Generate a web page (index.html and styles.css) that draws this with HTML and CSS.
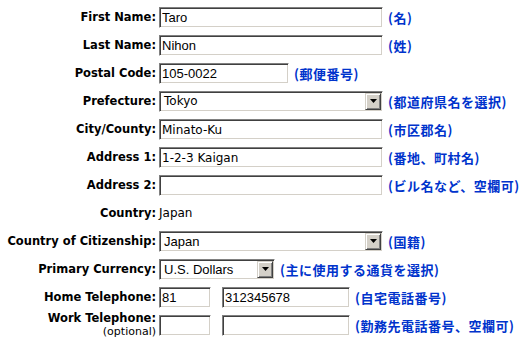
FILE: index.html
```html
<!DOCTYPE html>
<html lang="ja">
<head>
<meta charset="utf-8">
<title>Address Form</title>
<link rel="stylesheet" href="styles.css">
</head>
<body>
<form class="form">
  <label class="label">First Name:</label>
  <div class="field"><input class="text w-long f-arial" value="Taro"><span class="hint">(名)</span></div>

  <label class="label">Last Name:</label>
  <div class="field"><input class="text w-long f-arial" value="Nihon"><span class="hint">(姓)</span></div>

  <label class="label">Postal Code:</label>
  <div class="field"><input class="text w-postal f-arial" value="105-0022"><span class="hint">(郵便番号)</span></div>

  <label class="label">Prefecture:</label>
  <div class="field"><div class="select w-long"><span class="select-value f-verdana">Tokyo</span><span class="select-btn"><svg width="7" height="4" viewBox="0 0 7 4"><path d="M0 0h7L3.5 4z" fill="#000"/></svg></span></div><span class="hint">(都道府県名を選択)</span></div>

  <label class="label">City/County:</label>
  <div class="field"><input class="text w-long f-verdana" value="Minato-Ku"><span class="hint">(市区郡名)</span></div>

  <label class="label">Address 1:</label>
  <div class="field"><input class="text w-long f-verdana" value="1-2-3 Kaigan"><span class="hint">(番地、町村名)</span></div>

  <label class="label">Address 2:</label>
  <div class="field"><input class="text w-long f-verdana" value=""><span class="hint">(ビル名など、空欄可)</span></div>

  <label class="label">Country:</label>
  <div class="field"><span class="plain">Japan</span></div>

  <label class="label">Country of Citizenship:</label>
  <div class="field"><div class="select w-long"><span class="select-value f-arial">Japan</span><span class="select-btn"><svg width="7" height="4" viewBox="0 0 7 4"><path d="M0 0h7L3.5 4z" fill="#000"/></svg></span></div><span class="hint">(国籍)</span></div>

  <label class="label">Primary Currency:</label>
  <div class="field"><div class="select w-currency"><span class="select-value f-arial">U.S. Dollars</span><span class="select-btn"><svg width="7" height="4" viewBox="0 0 7 4"><path d="M0 0h7L3.5 4z" fill="#000"/></svg></span></div><span class="hint">(主に使用する通貨を選択)</span></div>

  <label class="label">Home Telephone:</label>
  <div class="field"><input class="text w-cc f-arial" value="81"><input class="text w-phone f-arial" value="312345678"><span class="hint">(自宅電話番号)</span></div>

  <label class="label label-two"><span class="label-line">Work Telephone:</span><span class="optional">(optional)</span></label>
  <div class="field"><input class="text w-cc f-arial" value=""><input class="text w-phone f-arial" value=""><span class="hint">(勤務先電話番号、空欄可)</span></div>
</form>
</body>
</html>
```

FILE: styles.css
```css
html, body {
  margin: 0;
  padding: 0;
  background: #fff;
}

.form {
  display: grid;
  grid-template-columns: 156px 1fr;
  grid-auto-rows: 28px;
  column-gap: 3px;
  padding-top: 3px;
  font-family: "DejaVu Sans", Verdana, sans-serif;
}

.label {
  display: flex;
  flex-direction: column;
  justify-content: center;
  align-items: flex-end;
  text-align: right;
  font-weight: bold;
  font-size: 11.5px;
  color: #000;
  white-space: nowrap;
}

.label-two {
  line-height: 13px;
}

.label-line {
  display: block;
}

.optional {
  display: block;
  font-weight: normal;
  font-size: 11px;
  line-height: 13px;
}

.field {
  display: flex;
  align-items: center;
  gap: 5px;
  white-space: nowrap;
}

.text {
  box-sizing: border-box;
  height: 21px;
  margin: 0;
  padding: 1px 2px 0;
  border: 1px solid;
  border-color: #808080 #fff #fff #808080;
  box-shadow: inset 1px 1px #404040, inset -1px -1px #d4d0c8;
  background: #fff;
  color: #000;
  outline: none;
}

.f-arial {
  font-family: "Liberation Sans", Arial, sans-serif;
  font-size: 13px;
}

.f-verdana {
  font-family: "DejaVu Sans", Verdana, sans-serif;
  font-size: 12px;
}

.w-long { width: 224px; }
.w-postal { width: 130px; }
.w-currency { width: 116px; }
.w-cc { width: 52px; margin-right: 6px; }
.w-phone { width: 128px; }

.select {
  box-sizing: border-box;
  height: 21px;
  display: flex;
  align-items: stretch;
  border: 1px solid;
  border-color: #808080 #fff #fff #808080;
  box-shadow: inset 1px 1px #404040, inset -1px -1px #d4d0c8;
  padding: 1px;
  background: #fff;
}

.select-value {
  flex: 1;
  display: flex;
  align-items: center;
  padding-left: 3px;
  color: #000;
}

.select-btn {
  box-sizing: border-box;
  width: 16px;
  display: flex;
  align-items: center;
  justify-content: center;
  background: #d4d0c8;
  border: 1px solid;
  border-color: #d4d0c8 #404040 #404040 #d4d0c8;
  box-shadow: inset 1px 1px #fff, inset -1px -1px #808080;
}

.plain {
  font-family: "DejaVu Sans", Verdana, sans-serif;
  font-size: 12px;
  color: #000;
}

.hint {
  font-family: "Noto Sans CJK JP", sans-serif;
  font-weight: bold;
  font-size: 13px;
  color: #0033cc;
  letter-spacing: 0.5px;
}
```
